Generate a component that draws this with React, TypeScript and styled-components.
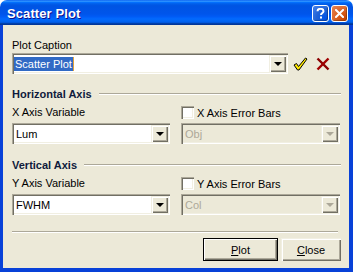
import React from "react";
import styled, { createGlobalStyle } from "styled-components";

const GlobalStyle = createGlobalStyle`
  html, body {
    margin: 0;
    padding: 0;
    background: #ffffff;
  }
  body {
    font-family: "Liberation Sans", Arial, sans-serif;
    font-size: 11px;
    color: #000000;
  }
`;

const Window = styled.div`
  width: 353px;
  height: 272px;
  display: flex;
  flex-direction: column;
  border-radius: 7px 7px 0 0;
  overflow: hidden;
`;

const TitleBar = styled.div`
  height: 25px;
  flex: none;
  display: flex;
  align-items: center;
  padding: 1px 5px 0 7px;
  box-sizing: border-box;
  background: linear-gradient(
    to bottom,
    #0058ee 0%,
    #3593ff 4%,
    #288eff 6%,
    #127dff 8%,
    #036ffc 10%,
    #0262ee 14%,
    #0057e5 20%,
    #0054e3 24%,
    #0055eb 56%,
    #005bf5 66%,
    #026afe 76%,
    #0062ef 86%,
    #0052d6 92%,
    #0040ab 94%,
    #003092 100%
  );
`;

const Title = styled.div`
  flex: 1;
  color: #ffffff;
  font-weight: bold;
  font-size: 13px;
  letter-spacing: 0.1px;
  text-shadow: 1px 1px #0f1089;
`;

const CaptionButton = styled.div<{ $close?: boolean }>`
  width: 17px;
  height: 17px;
  margin-left: 2px;
  box-sizing: border-box;
  border: 1px solid #ffffff;
  border-radius: 3px;
  display: flex;
  align-items: center;
  justify-content: center;
  background: ${(p) =>
    p.$close
      ? "radial-gradient(circle at 80% 80%, #cc4600 0%, #dc6527 50%, #e5865a 100%)"
      : "radial-gradient(circle at 80% 80%, #0054e9 0%, #2263d5 50%, #4884f0 100%)"};
  box-shadow: inset -1px -1px 1px rgba(0, 0, 0, 0.3);
`;

const Frame = styled.div`
  flex: 1;
  display: flex;
  flex-direction: column;
  background: #ece9d8;
  border-left: 3px solid #0841d8;
  border-right: 4px solid #0841d8;
  border-bottom: 4px solid #0841d8;
  padding: 14px 8px 7px 9px;
`;

const Label = styled.div`
  height: 13px;
  line-height: 13px;
  white-space: nowrap;
`;

const CaptionRow = styled.div`
  margin-top: 1px;
  display: flex;
  align-items: center;
`;

// classic sunken 3D edge, used by combos and checkboxes
const sunken = `
  box-shadow: inset 1px 1px #aca899, inset 2px 2px #716f64, inset -1px -1px #ffffff,
    inset -2px -2px #f1efe2;
`;

const raised = `
  box-shadow: inset 1px 1px #f1efe2, inset 2px 2px #ffffff, inset -1px -1px #716f64,
    inset -2px -2px #aca899;
`;

const Combo = styled.div<{ $width: number; $disabled?: boolean }>`
  width: ${(p) => p.$width}px;
  height: 21px;
  box-sizing: border-box;
  padding: 2px;
  display: flex;
  background: ${(p) => (p.$disabled ? "#ece9d8" : "#ffffff")};
  ${sunken}
`;

const ComboText = styled.div<{ $disabled?: boolean }>`
  flex: 1;
  display: flex;
  align-items: center;
  padding-left: 2px;
  color: ${(p) => (p.$disabled ? "#aca899" : "#000000")};
  white-space: nowrap;
  overflow: hidden;
`;

const Selected = styled.span`
  background: #316ac5;
  color: #ffffff;
  line-height: 14px;
  padding: 0 1px 0 1px;
  margin-left: -2px;
  border-right: 1px solid #e3a23a;
`;

const DropButton = styled.div<{ $disabled?: boolean }>`
  width: 17px;
  height: 17px;
  flex: none;
  box-sizing: border-box;
  background: #ece9d8;
  display: flex;
  align-items: center;
  justify-content: center;
  ${raised}

  &::after {
    content: "";
    border-left: 4px solid transparent;
    border-right: 4px solid transparent;
    border-top: 4px solid ${(p) => (p.$disabled ? "#aca899" : "#000000")};
    margin-top: 1px;
  }
`;

const IconSlot = styled.div<{ $gap: number }>`
  margin-left: ${(p) => p.$gap}px;
  display: flex;
  align-items: center;
`;

const GroupHeading = styled.div<{ $top: number }>`
  margin-top: ${(p) => p.$top}px;
  height: 13px;
  display: flex;
  align-items: center;
  font-weight: bold;
  color: #0f1a3c;
  white-space: nowrap;

  &::after {
    content: "";
    flex: 1;
    margin-left: 7px;
    border-top: 1px solid #aca899;
    border-bottom: 1px solid #ffffff;
  }
`;

const AxisGrid = styled.div`
  margin-top: 6px;
  display: grid;
  grid-template-columns: 158px 159px;
  column-gap: 11px;
  row-gap: 4px;
`;

const CheckLabel = styled.label`
  height: 13px;
  display: flex;
  align-items: center;
  white-space: nowrap;
`;

const CheckBox = styled.span`
  width: 13px;
  height: 13px;
  box-sizing: border-box;
  margin-right: 3px;
  background: #ffffff;
  ${sunken}
`;

const Separator = styled.div`
  margin: 16px 3px 0 0;
  border-top: 1px solid #aca899;
  border-bottom: 1px solid #ffffff;
`;

const ButtonRow = styled.div`
  margin-top: 5px;
  display: flex;
  justify-content: flex-end;
  gap: 3px;
`;

const PushButton = styled.div<{ $width: number; $default?: boolean }>`
  width: ${(p) => p.$width}px;
  height: 23px;
  box-sizing: border-box;
  display: flex;
  align-items: center;
  justify-content: center;
  background: #ece9d8;
  border: ${(p) => (p.$default ? "1px solid #000000" : "none")};
  ${(p) =>
    p.$default
      ? "box-shadow: inset 1px 1px #ffffff, inset -1px -1px #716f64, inset -2px -2px #aca899;"
      : raised}
`;

const Mnemonic = styled.span`
  text-decoration: underline;
`;

function HelpGlyph() {
  return (
    <svg width="9" height="11" viewBox="0 0 9 11">
      <path
        d="M1.5 3.2 C1.5 1.4 3 0.8 4.5 0.8 C6.2 0.8 7.5 1.7 7.5 3.2 C7.5 5 5 5 5 7"
        fill="none"
        stroke="#ffffff"
        strokeWidth="2"
      />
      <rect x="4" y="8.5" width="2" height="2" fill="#ffffff" />
    </svg>
  );
}

function CloseGlyph() {
  return (
    <svg width="9" height="9" viewBox="0 0 9 9">
      <path d="M1 1 L8 8 M8 1 L1 8" stroke="#ffffff" strokeWidth="2" strokeLinecap="square" />
    </svg>
  );
}

function OkGlyph() {
  return (
    <svg width="15" height="14" viewBox="0 0 15 14">
      <path
        d="M1 8 L3.5 6.5 L5.5 9.5 L12.5 1 L14 2 L6 13 L4.5 13 Z"
        fill="#ffe800"
        stroke="#000000"
        strokeWidth="1"
        strokeLinejoin="round"
      />
    </svg>
  );
}

function CancelGlyph() {
  return (
    <svg width="14" height="14" viewBox="0 0 14 14">
      <path d="M1.5 1.5 L12.5 12.5" stroke="#8b0000" strokeWidth="2.4" />
      <path d="M12.5 1.5 L1.5 12.5" stroke="#a00000" strokeWidth="2.4" />
    </svg>
  );
}

function AxisSection({
  title,
  top,
  variableLabel,
  value,
  errorLabel,
  errorValue,
}: any) {
  return (
    <>
      <GroupHeading $top={top}>{title}</GroupHeading>
      <AxisGrid>
        <Label>{variableLabel}</Label>
        <CheckLabel>
          <CheckBox />
          {errorLabel}
        </CheckLabel>
        <Combo $width={158}>
          <ComboText>{value}</ComboText>
          <DropButton />
        </Combo>
        <Combo $width={159} $disabled>
          <ComboText $disabled>{errorValue}</ComboText>
          <DropButton $disabled />
        </Combo>
      </AxisGrid>
    </>
  );
}

export default function App() {
  return (
    <>
      <GlobalStyle />
      <Window>
        <TitleBar>
          <Title>Scatter Plot</Title>
          <CaptionButton>
            <HelpGlyph />
          </CaptionButton>
          <CaptionButton $close>
            <CloseGlyph />
          </CaptionButton>
        </TitleBar>
        <Frame>
          <Label>Plot Caption</Label>
          <CaptionRow>
            <Combo $width={276}>
              <ComboText>
                <Selected>Scatter Plot</Selected>
              </ComboText>
              <DropButton />
            </Combo>
            <IconSlot $gap={5}>
              <OkGlyph />
            </IconSlot>
            <IconSlot $gap={8}>
              <CancelGlyph />
            </IconSlot>
          </CaptionRow>
          <AxisSection
            title="Horizontal Axis"
            top={13}
            variableLabel="X Axis Variable"
            value="Lum"
            errorLabel="X Axis Error Bars"
            errorValue="Obj"
          />
          <AxisSection
            title="Vertical Axis"
            top={14}
            variableLabel="Y Axis Variable"
            value="FWHM"
            errorLabel="Y Axis Error Bars"
            errorValue="Col"
          />
          <Separator />
          <ButtonRow>
            <PushButton $width={75} $default>
              <span>
                <Mnemonic>P</Mnemonic>lot
              </span>
            </PushButton>
            <PushButton $width={60}>
              <span>
                <Mnemonic>C</Mnemonic>lose
              </span>
            </PushButton>
          </ButtonRow>
        </Frame>
      </Window>
    </>
  );
}
